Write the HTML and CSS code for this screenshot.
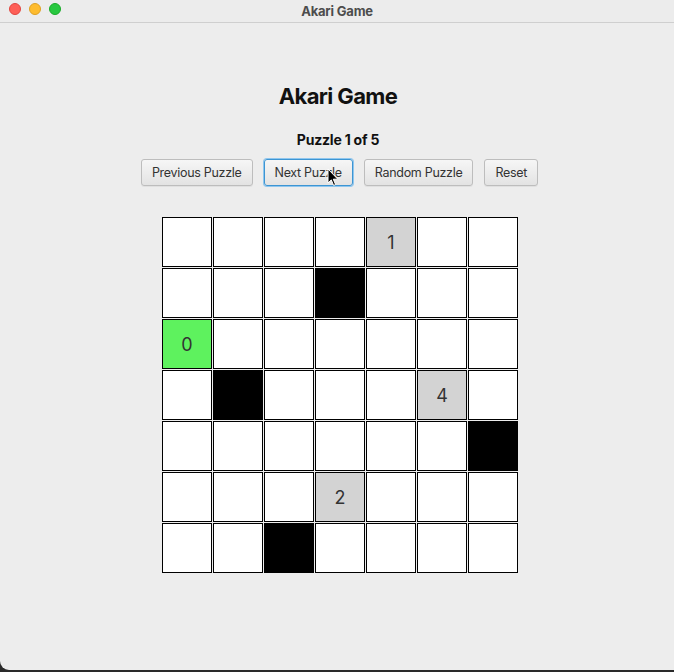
FILE: index.html
```html
<!DOCTYPE html>
<html>
<head>
<meta charset="utf-8">
<title>Akari Game</title>
<link rel="stylesheet" href="styles.css">
</head>
<body>
<div class="window">
  <div class="titlebar">
    <div class="lights">
      <span class="light red"></span>
      <span class="light yellow"></span>
      <span class="light green"></span>
    </div>
    <div class="wintitle">Akari Game</div>
  </div>
  <div class="content">
    <h1 class="title">Akari Game</h1>
    <div class="label">Puzzle 1 of 5</div>
    <div class="buttons">
      <button class="btn">Previous Puzzle</button>
      <button class="btn focused">Next Puzzle
        <svg class="cursor" width="12" height="19" viewBox="0 0 12 19"><path d="M1 1 L1 15 L4.3 11.9 L6.6 17.4 L8.6 16.6 L6.3 11.2 L10.8 11.2 Z" fill="#000" stroke="#fff" stroke-width="1" stroke-linejoin="round"/></svg>
      </button>
      <button class="btn">Random Puzzle</button>
      <button class="btn">Reset</button>
    </div>
    <div class="grid">
      <div class="cell"></div><div class="cell"></div><div class="cell"></div><div class="cell"></div><div class="cell num">1</div><div class="cell"></div><div class="cell"></div>
      <div class="cell"></div><div class="cell"></div><div class="cell"></div><div class="cell black"></div><div class="cell"></div><div class="cell"></div><div class="cell"></div>
      <div class="cell num ok">0</div><div class="cell"></div><div class="cell"></div><div class="cell"></div><div class="cell"></div><div class="cell"></div><div class="cell"></div>
      <div class="cell"></div><div class="cell black"></div><div class="cell"></div><div class="cell"></div><div class="cell"></div><div class="cell num">4</div><div class="cell"></div>
      <div class="cell"></div><div class="cell"></div><div class="cell"></div><div class="cell"></div><div class="cell"></div><div class="cell"></div><div class="cell black"></div>
      <div class="cell"></div><div class="cell"></div><div class="cell"></div><div class="cell num">2</div><div class="cell"></div><div class="cell"></div><div class="cell"></div>
      <div class="cell"></div><div class="cell"></div><div class="cell black"></div><div class="cell"></div><div class="cell"></div><div class="cell"></div><div class="cell"></div>
    </div>
  </div>
</div>
</body>
</html>
```
FILE: styles.css
```css
html, body {
  margin: 0;
  padding: 0;
  background: #2a2a2a;
}
.window {
  width: 674px;
  height: 670px;
  background: #ededed;
  border-radius: 0 0 0 9px;
  overflow: hidden;
  font-family: Inter, "Noto Sans", sans-serif;
  display: flex;
  flex-direction: column;
}
.titlebar {
  height: 22px;
  border-bottom: 1px solid #cfcfcf;
  background: #ececec;
  position: relative;
  display: flex;
  align-items: center;
  justify-content: center;
}
.lights {
  position: absolute;
  left: 9px;
  top: 3px;
  display: flex;
  gap: 8px;
}
.light {
  width: 12px;
  height: 12px;
  border-radius: 50%;
  box-sizing: border-box;
}
.red { background: #fe5f57; border: 1px solid #e14640; }
.yellow { background: #febc2e; border: 1px solid #dea123; }
.green { background: #28c840; border: 1px solid #1aab29; }
.wintitle {
  font-size: 13px;
  font-weight: 700;
  color: #4d4d4d;
  letter-spacing: -0.2px;
}
.content {
  display: flex;
  flex-direction: column;
  align-items: center;
  padding-top: 60px;
}
.title {
  margin: 0;
  font-size: 22px;
  line-height: 26px;
  font-weight: 700;
  color: #111;
  letter-spacing: -0.6px;
  margin-left: 2px;
}
.label {
  margin-top: 22px;
  font-size: 14px;
  line-height: 17px;
  font-weight: 700;
  color: #111;
  letter-spacing: -0.2px;
  margin-left: 2px;
}
.buttons {
  margin-top: 11px;
  display: flex;
  gap: 11px;
  margin-left: 5px;
}
.btn {
  position: relative;
  height: 27px;
  padding: 0 10px;
  font-family: Inter, "Noto Sans", sans-serif;
  font-size: 12.5px;
  letter-spacing: -0.3px;
  color: #333;
  background: linear-gradient(#f6f6f6, #e3e3e3);
  border: 1px solid #bdbdbd;
  border-radius: 3px;
  box-shadow: 0 1px 0 rgba(0,0,0,0.05);
}
.btn.focused {
  border-color: #3d95d3;
  box-shadow: 0 0 0 1px #8fc6ee;
}
.cursor {
  position: absolute;
  left: 62px;
  top: 8px;
}
.grid {
  margin-top: 31px;
  margin-left: 6px;
  display: grid;
  grid-template-columns: repeat(7, 50px);
  grid-auto-rows: 50px;
  gap: 1px;
}
.cell {
  box-sizing: border-box;
  border: 1px solid #000;
  background: #fff;
  display: flex;
  align-items: center;
  justify-content: center;
  font-size: 18px;
  color: #333;
}
.cell.num { background: #d3d3d3; }
.cell.ok { background: #5ef25e; }
.cell.black { background: #000; }
```
